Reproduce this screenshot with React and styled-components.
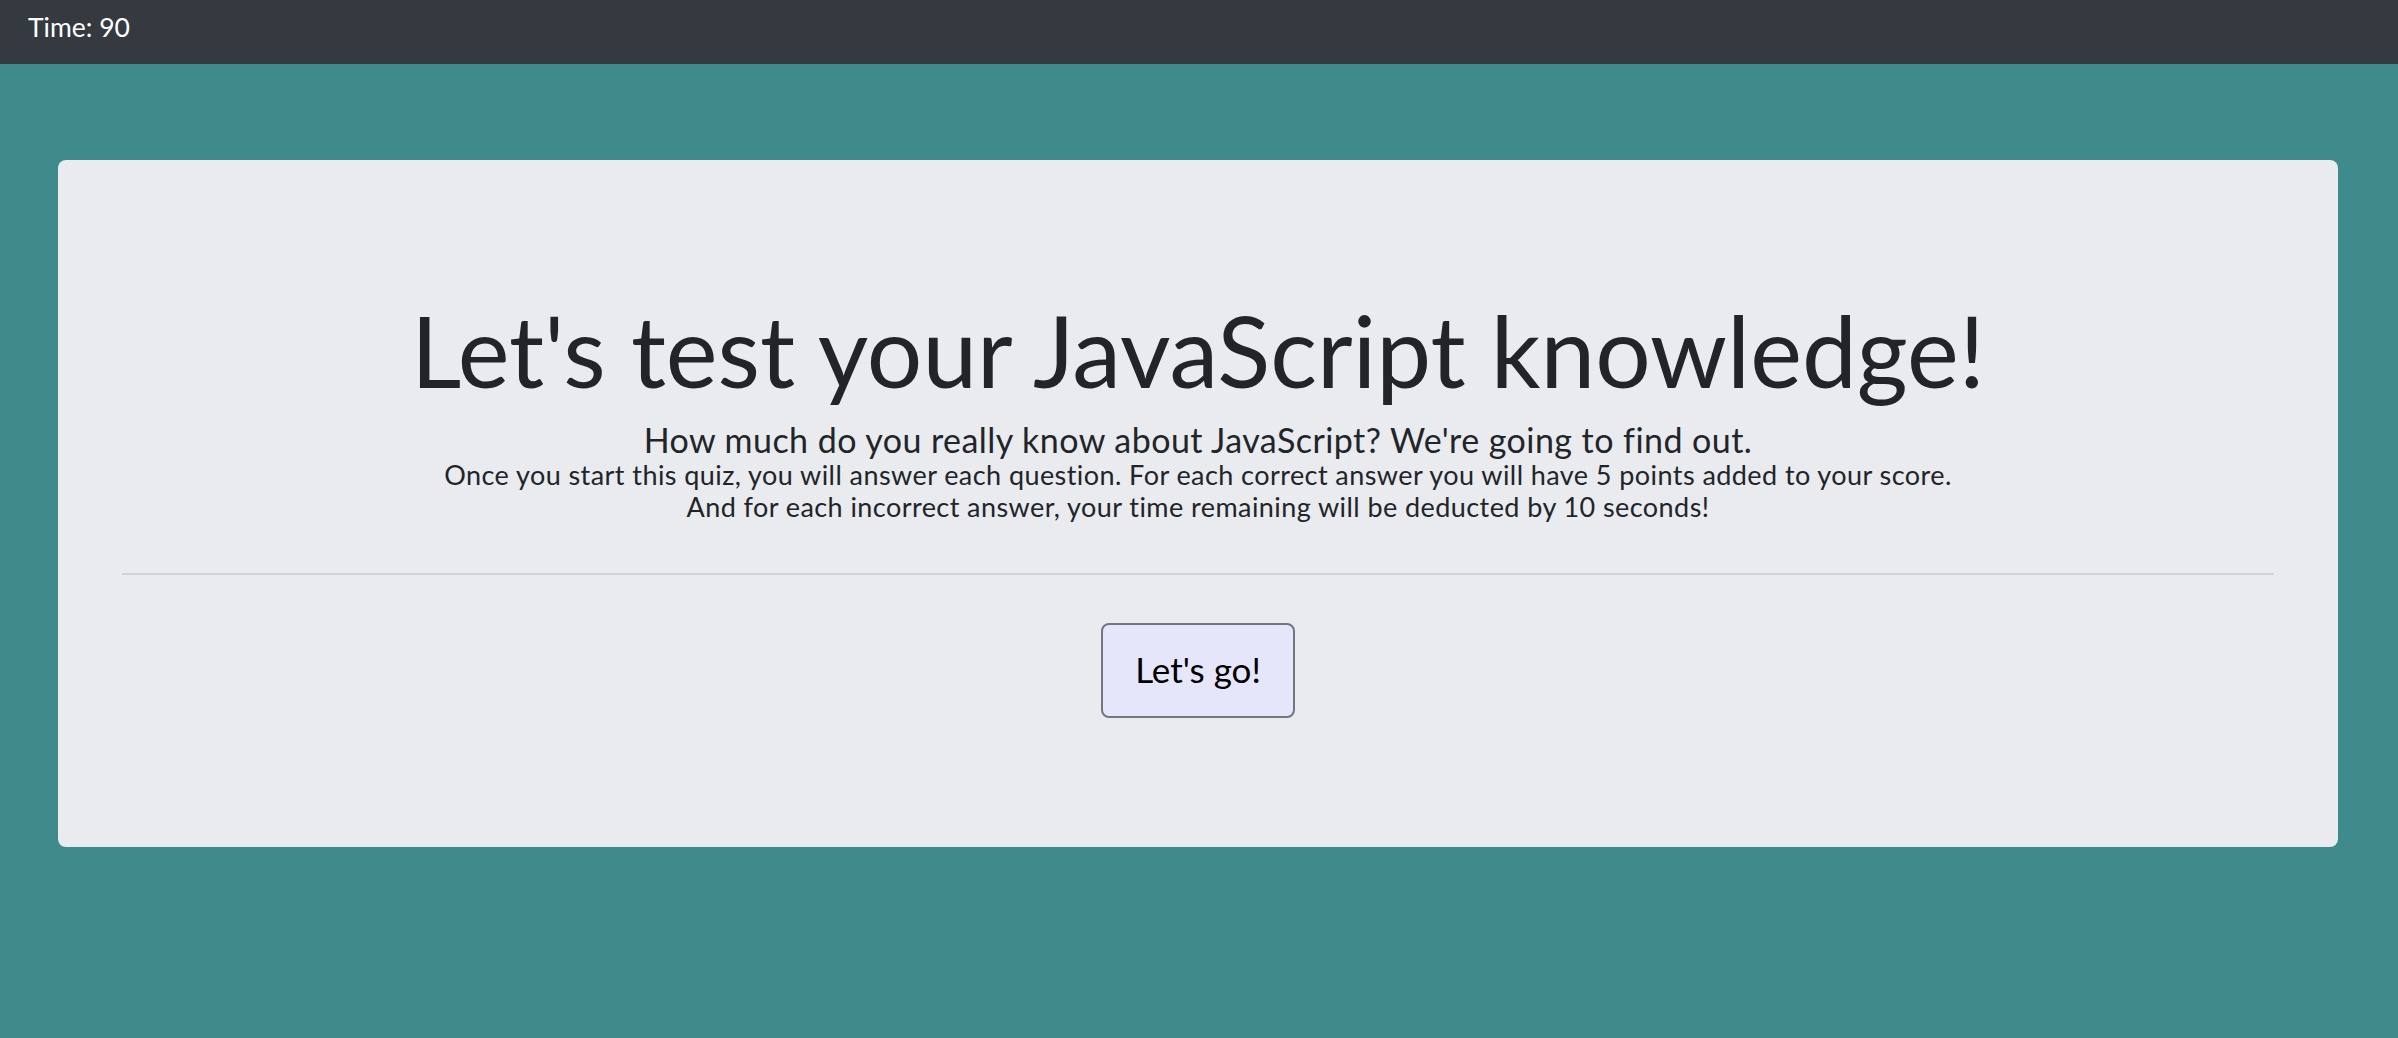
import React from "react";
import styled, { createGlobalStyle } from "styled-components";

const GlobalStyle = createGlobalStyle`
  html, body {
    margin: 0;
    padding: 0;
    min-height: 100%;
    background-color: #3f8a8b;
  }
  body {
    font-family: Lato, "Open Sans", sans-serif;
    color: #212529;
  }
`;

const TopBar = styled.header`
  height: 64px;
  background-color: #343a40;
  display: flex;
  align-items: flex-start;
  padding: 12px 0 0 28px;
  box-sizing: border-box;
`;

const Timer = styled.span`
  color: #ffffff;
  font-size: 26.5px;
  line-height: 1.2;
`;

const Main = styled.main`
  padding: 96px 60px 0 58px;
`;

const Jumbotron = styled.section`
  background-color: #e9ebef;
  border-radius: 8px;
  padding: 133px 64px 129px;
  display: flex;
  flex-direction: column;
  align-items: center;
  text-align: center;
`;

const Title = styled.h1`
  margin: 0 0 13px;
  font-size: 98px;
  font-weight: 400;
  line-height: 115px;
`;

const Lead = styled.p`
  margin: 0;
  font-size: 34px;
  letter-spacing: 0.45px;
  line-height: 38px;
`;

const Rules = styled.p`
  margin: 0;
  font-size: 27px;
  letter-spacing: 0.43px;
  line-height: 32px;
`;

const Divider = styled.hr`
  align-self: stretch;
  margin: 50px 0 48px;
  border: 0;
  border-top: 2px solid #d1d3d7;
`;

const StartButton = styled.button`
  font-family: inherit;
  font-size: 35px;
  line-height: 1.2;
  color: #000000;
  background-color: #e6e6fa;
  border: 2px solid #72777e;
  border-radius: 8px;
  padding: 23px 32px 26px;
  cursor: pointer;
`;

const App = () => {
  return (
    <>
      <GlobalStyle />
      <TopBar>
        <Timer>Time: 90</Timer>
      </TopBar>
      <Main>
        <Jumbotron>
          <Title>Let's test your JavaScript knowledge!</Title>
          <Lead>
            How much do you really know about JavaScript? We're going to find
            out.
          </Lead>
          <Rules>
            Once you start this quiz, you will answer each question. For each
            correct answer you will have 5 points added to your score.
          </Rules>
          <Rules>
            And for each incorrect answer, your time remaining will be deducted
            by 10 seconds!
          </Rules>
          <Divider />
          <StartButton>Let's go!</StartButton>
        </Jumbotron>
      </Main>
    </>
  );
};

export default App;
